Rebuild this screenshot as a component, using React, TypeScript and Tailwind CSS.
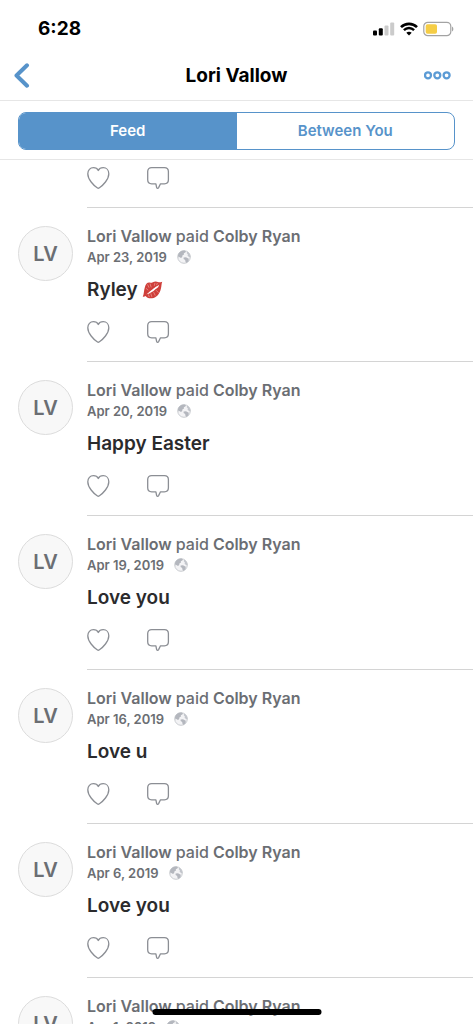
import React from 'react';

const PAYMENTS = [
  { date: 'Apr 23, 2019', note: 'Ryley', kiss: true },
  { date: 'Apr 20, 2019', note: 'Happy Easter' },
  { date: 'Apr 19, 2019', note: 'Love you' },
  { date: 'Apr 16, 2019', note: 'Love u' },
  { date: 'Apr 6, 2019', note: 'Love you' },
  { date: 'Apr 1, 2019', note: 'Love you' },
];

const KissMark = () => (
  <svg role="img" aria-label="kiss mark" width="21" height="20" viewBox="0 0 22 20" fill="none">
    <path d="M0.800 17C2.200 14 1.800 10.500 3 7C3.800 4 5.200 2 7.800 2.100C9.500 2.100 10.400 2.800 11.300 2C13 0.800 15 0.700 16.700 1.600C18 2 19.500 1.900 21.200 1.300C20.200 3.800 20.600 6 19.700 9C18.600 13.800 15.500 18.200 10.500 18.700C7 19.100 5 17.800 3.800 16.200C3 16.800 2 17.300 0.800 17Z" fill="#cf3f3a" />
    <path d="M4.500 14.500C6.600 13.800 7.400 11.600 9.500 10.600C11.600 9.500 12.700 7.800 14.500 6.700C16.200 5.700 17.200 5.200 18 4.200C17.600 6.400 16.800 7.300 15.200 8.400C13.500 9.500 12.400 11 10.300 12C8.300 12.900 6.900 14.400 4.500 14.500Z" fill="#fff" />
    <path d="M6 4.500L7.200 7.200M8.500 3.600L9.500 6.800M13.500 3L13 5.200M16 3L15.400 4.500M4.500 8.500L6.200 10M6.800 15L7.500 17M9.300 14L10.200 16.800M12.300 12.500L13.700 15.500M15 10.500L17 12.500" stroke="#eea39d" strokeWidth="0.700" strokeLinecap="round" />
  </svg>
);

const Globe = () => (
  <svg aria-hidden="true" width="14" height="14" viewBox="0 0 14 14" fill="none">
    <circle cx="7" cy="7" r="6.300" fill="#f3f3f5" stroke="#c4c7cc" strokeWidth="0.900" />
    <path d="M0.900 5.200C1.600 2.400 4 0.600 7.500 0.600L9 1.400L8.300 2.600L6.800 3.200L7 4.600L5.400 5.600L5.200 7L4 8L2.400 7L1.600 7.600Z" fill="#b4b7be" />
    <path d="M10 1.600C12.200 2.600 13.500 4.600 13.500 7L12.300 7.200L10.600 5.800L10.900 4.400L9.800 3.200Z" fill="#c3c6cc" />
    <path d="M6.600 7.400L9 7.200L11.800 8.800L11.500 11.200L9.400 13L8.400 11.600L8.200 10L6.600 9Z" fill="#b4b7be" />
  </svg>
);

const Actions = () => (
  <div className="flex gap-9">
    <button aria-label="Like">
      <svg width="24" height="24" viewBox="0 0 24 24" fill="none" stroke="#8b8e94" strokeWidth="1.300" strokeLinejoin="round">
        <path d="M11.300 5.500C10.400 3.600 8.600 2.700 6.400 2.700C3.200 2.700 0.800 5.100 0.800 8.700C0.800 14.300 6.500 20.500 10.500 23C11 23.300 11.600 23.300 12.100 23C16.100 20.500 21.800 14.300 21.800 8.700C21.800 5.100 19.400 2.700 16.200 2.700C14 2.700 12.200 3.600 11.300 5.500Z" />
      </svg>
    </button>
    <button aria-label="Comment">
      <svg width="24" height="24" viewBox="0 0 24 24" fill="none" stroke="#8b8e94" strokeWidth="1.300" strokeLinejoin="round">
        <path d="M4.700 2.600H17.400C19.900 2.600 21.400 4.100 21.400 6.600V14.800C21.400 17.300 19.900 18.800 17.400 18.800H13.500L11.600 22.600C11 23.700 9.800 23.500 9.600 22.400L8.900 18.800H4.700C2.200 18.800 0.700 17.300 0.700 14.800V6.600C0.700 4.100 2.200 2.600 4.700 2.600Z" />
      </svg>
    </button>
  </div>
);

const StatusBar = () => (
  <div className="flex h-[50px] shrink-0 items-center justify-between pt-2 pr-[19px] pl-[38px]">
    <span className="text-[19px] leading-6 font-bold">6:28</span>
    <div className="flex items-center gap-[5px]">
      <svg aria-hidden="true" width="22" height="14" viewBox="0 0 22 14">
        <rect x="0" y="8.500" width="4" height="5" rx="1" fill="#000" />
        <rect x="5.800" y="6.200" width="4" height="7.300" rx="1" fill="#000" />
        <rect x="11.500" y="3.400" width="4" height="10.100" rx="1" fill="#cbcbcb" />
        <rect x="17.200" y="0.600" width="4" height="12.900" rx="1" fill="#cbcbcb" />
      </svg>
      <svg aria-hidden="true" width="18" height="14" viewBox="0 0 18 14" fill="none" stroke="#000">
        <path d="M1 5.200C5.500 0.700 12.500 0.700 17 5.200" strokeWidth="2.600" />
        <path d="M3.900 8.200C6.800 5.300 11.200 5.300 14.100 8.200" strokeWidth="2.400" />
        <path d="M9 13.600L6.300 10.800C7.900 9.400 10.100 9.400 11.700 10.800Z" fill="#000" stroke="none" />
      </svg>
      <svg aria-hidden="true" width="31" height="16" viewBox="0 0 31 16" fill="none">
        <rect x="0.800" y="1.300" width="27" height="13.400" rx="4" stroke="#a3a3a3" strokeWidth="1.200" />
        <rect x="2.700" y="3.200" width="11.300" height="9.600" rx="1.800" fill="#f5cd46" />
        <path d="M29 5.600C30.800 6.400 30.800 9.800 29 10.600Z" fill="#a3a3a3" />
      </svg>
    </div>
  </div>
);

const App = () => {
  return (
    <div className="relative flex h-screen flex-col overflow-hidden bg-white font-['Inter','Liberation_Sans',sans-serif] text-black">
      <StatusBar />

      <header className="grid h-[51px] shrink-0 grid-cols-[1fr_auto_1fr] items-center border-b border-[#e6e6e6] px-[13px]">
        <button aria-label="Back" className="justify-self-start">
          <svg width="18" height="26" viewBox="0 0 18 26" fill="none" stroke="#5793ca" strokeWidth="4" strokeLinecap="round" strokeLinejoin="round">
            <path d="M14 3.300L3.500 13.500L14 23.700" />
          </svg>
        </button>
        <h1 className="pt-0.5 text-[19px] leading-6 font-bold">Lori Vallow</h1>
        <button aria-label="More" className="justify-self-end pr-2">
          <svg width="28" height="10" viewBox="0 0 28 10" fill="none" stroke="#5b9bd5" strokeWidth="2.300">
            <circle cx="4" cy="5.300" r="3" />
            <circle cx="13.300" cy="5.300" r="3" />
            <circle cx="22.600" cy="5.300" r="3" />
          </svg>
        </button>
      </header>

      <div className="shrink-0 border-b border-[#e6e6e6] px-[18px] pt-[11px] pb-[9px]">
        <div className="grid h-[38px] grid-cols-2 overflow-hidden rounded-lg border border-[#5793ca] text-[15px] font-semibold">
          <button className="bg-[#5793ca] text-white">Feed</button>
          <button className="text-[#5793ca]">Between You</button>
        </div>
      </div>

      <main className="min-h-0 flex-1 overflow-hidden">
        <div className="ml-[87px] border-b border-[#d4d4d4] pt-[5px] pb-[18px]">
          <Actions />
        </div>
        {PAYMENTS.map((payment, index) => (
          <article key={index} className="flex pl-[18px]">
            <div className="mt-[18px] mr-[14px] flex size-[55px] shrink-0 items-center justify-center rounded-full border border-[#dcdcdc] bg-[#f8f8f8] text-xl font-semibold text-[#6b6e73]">
              LV
            </div>
            <div className="flex-1 border-b border-[#d4d4d4] pt-4 pb-[18px]">
              <h2 className="text-base leading-6 font-semibold text-[#6b6e73]">
                Lori Vallow <span className="font-medium">paid</span> Colby Ryan
              </h2>
              <p className="flex items-center gap-[10px] text-[13px] leading-[18px] font-semibold text-[#6b6e73]">
                {payment.date}
                <Globe />
              </p>
              <p className="mt-2 mb-[13px] flex items-center gap-1 text-[19px] leading-8 font-semibold text-[#2b2b2d]">
                {payment.note}
                {payment.kiss && <KissMark />}
              </p>
              <Actions />
            </div>
          </article>
        ))}
      </main>

      {/* Home indicator */}
      <div className="absolute bottom-[9px] left-1/2 h-[6px] w-[169px] -translate-x-1/2 rounded-full bg-black"></div>
    </div>
  );
};

export default App;
